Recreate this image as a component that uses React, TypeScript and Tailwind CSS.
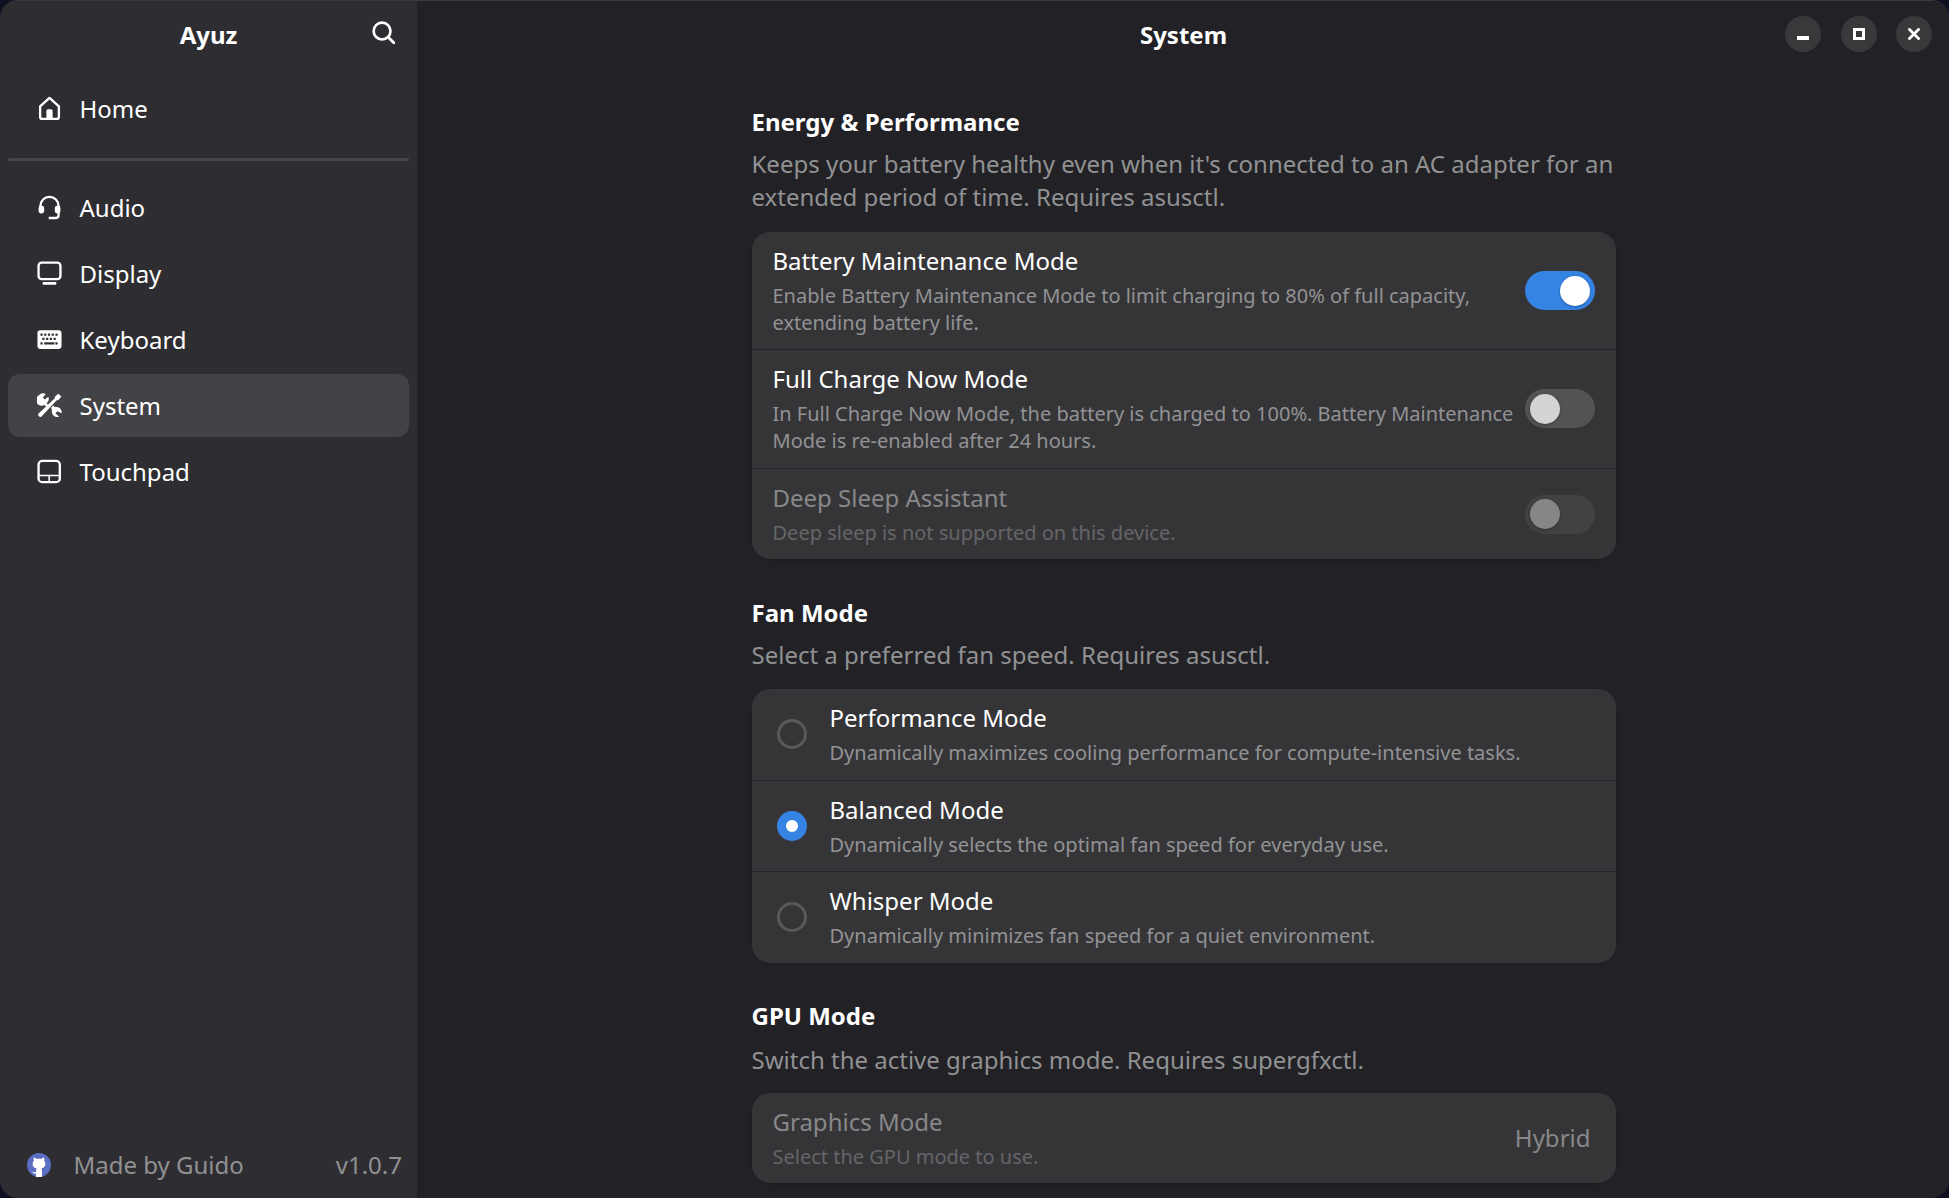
import React from 'react';

const Icon = ({ children }: { children: React.ReactNode }) => (
    <svg viewBox="0 0 16 16" className="w-[25px] h-[25px] shrink-0 text-white" fill="none" stroke="currentColor" strokeWidth="1.5">
        {children}
    </svg>
);

const HomeIcon = () => (
    <Icon>
        <path d="M8 1.2 L14 6.6 V13.2 Q14 14.6 12.8 14.6 H3.2 Q2 14.6 2 13.2 V6.6 Z" strokeLinejoin="round" />
        <path d="M6 14.4 V9.6 Q6 8.4 7 8.4 H9 Q10 8.4 10 9.6 V14.4 Z" fill="currentColor" stroke="none" />
    </Icon>
);

const HeadsetIcon = () => (
    <Icon>
        <path d="M2.2 9 V7 A5.8 5.8 0 0 1 13.8 7 V13 Q13.8 14.7 12.2 14.7 H7.5" />
        <rect x="1" y="6.8" width="3.6" height="5" rx="1.5" fill="currentColor" stroke="none" />
        <rect x="11.4" y="6.8" width="3.6" height="5" rx="1.5" fill="currentColor" stroke="none" />
    </Icon>
);

const DisplayIcon = () => (
    <Icon>
        <rect x="1" y="1" width="14" height="10.6" rx="2" />
        <rect x="3.6" y="13.4" width="8.8" height="1.8" rx="0.6" fill="currentColor" stroke="none" />
    </Icon>
);

const KeyboardIcon = () => (
    <svg viewBox="0 0 16 16" className="w-[25px] h-[25px] shrink-0 text-white">
        <rect x="0.3" y="2" width="15.4" height="12" rx="1.8" fill="currentColor" />
        <g fill="#2e2e32">
            <rect x="2.2" y="4.2" width="1.4" height="1.4" />
            <rect x="4.6" y="4.2" width="1.4" height="1.4" />
            <rect x="7" y="4.2" width="1.4" height="1.4" />
            <rect x="9.4" y="4.2" width="1.4" height="1.4" />
            <rect x="11.8" y="4.2" width="1.4" height="1.4" />
            <rect x="3.4" y="6.9" width="1.4" height="1.4" />
            <rect x="5.8" y="6.9" width="1.4" height="1.4" />
            <rect x="8.2" y="6.9" width="1.4" height="1.4" />
            <rect x="10.6" y="6.9" width="1.4" height="1.4" />
            <rect x="2.2" y="9.8" width="1.4" height="1.4" />
            <rect x="4.6" y="9.8" width="6.6" height="1.4" />
            <rect x="11.8" y="9.8" width="1.4" height="1.4" />
        </g>
    </svg>
);

const ToolsIcon = () => (
    <svg viewBox="0 0 16 16" className="w-[25px] h-[25px] shrink-0 text-white" fill="currentColor">
        <path d="M13.6 0.4 L15.6 2.2 L13.6 4.6 L12.6 4.6 L2.9 15 Q2.2 15.7 1.4 15.1 L0.9 14.6 Q0.4 13.8 1 13.1 L11.4 3.4 L11.4 2.4 Z" />
        <path d="M1.2 1.4 A3.6 3.6 0 0 1 5.6 0.6 L3.8 2.8 L5 4.2 L7.2 2.4 A3.6 3.6 0 0 1 6.2 6.6 L7.4 7.8 L6 9 L4.8 7.7 A3.6 3.6 0 0 1 1.2 1.4 Z" />
        <path d="M9 9.4 L10.4 8 L11.4 9 A3.6 3.6 0 0 1 15.8 13 L12.9 11.7 L11.8 12.9 L14.2 15.2 A3.6 3.6 0 0 1 9.6 10.8 Z" />
    </svg>
);

const TouchpadIcon = () => (
    <Icon>
        <rect x="1" y="1.2" width="13.6" height="13.6" rx="2.4" />
        <path d="M1 10.6 H14.6 M7.8 10.6 V14.8" strokeWidth="1" />
    </Icon>
);

const GithubIcon = () => (
    <svg viewBox="0 0 24 24" className="w-6 h-6 shrink-0">
        <circle cx="12" cy="12" r="12" fill="#5a6fc4" />
        <path d="M7 4.6 C8 4.6 9.2 5.4 9.8 6 C11 5.7 13 5.7 14.2 6 C14.8 5.4 16 4.6 17 4.6 C17.5 5.8 17.5 7 17.2 7.8 C18 8.7 18.4 9.6 18.4 10.8 C18.4 13.8 16.4 15.2 14.2 15.6 C14.8 16.2 15 17 15 17.8 V24 H9 V20.6 C7.4 21 6 20.4 5.2 18.8 C6.4 19 7.6 19.8 9 19 V17.8 C9 17 9.2 16.2 9.8 15.6 C7.6 15.2 5.6 13.8 5.6 10.8 C5.6 9.6 6 8.7 6.8 7.8 C6.5 7 6.5 5.8 7 4.6 Z" fill="#ffffff" />
    </svg>
);

const navTop = [{ label: 'Home', icon: <HomeIcon /> }];
const navRest = [
    { label: 'Audio', icon: <HeadsetIcon /> },
    { label: 'Display', icon: <DisplayIcon /> },
    { label: 'Keyboard', icon: <KeyboardIcon /> },
    { label: 'System', icon: <ToolsIcon />, active: true },
    { label: 'Touchpad', icon: <TouchpadIcon /> },
];

const NavRow = ({ label, icon, active }: { label: string; icon: React.ReactNode; active?: boolean }) => (
    <div className={`flex items-center h-[63px] mx-2 pl-[29px] gap-[18px] rounded-[12px] text-[24px] text-white ${active ? 'bg-[#434347]' : ''}`}>
        {icon}
        <span className="-ml-[0.5px]">{label}</span>
    </div>
);

const Toggle = ({ on, disabled }: { on?: boolean; disabled?: boolean }) => (
    <div
        className={`w-[70px] h-[39px] shrink-0 rounded-full flex items-center px-[5px] ${on ? 'bg-[#3584e4] justify-end' : disabled ? 'bg-[#424245]' : 'bg-[#535356]'}`}
    >
        <div className={`w-[30px] h-[30px] rounded-full shadow-[0_1px_3px_rgba(0,0,0,0.3)] ${on ? 'bg-white' : disabled ? 'bg-[#868687]' : 'bg-[#d3d3d3]'}`} />
    </div>
);

const Radio = ({ on }: { on?: boolean }) =>
    on ? (
        <div className="w-[30px] h-[30px] shrink-0 rounded-full bg-[#3584e4] flex items-center justify-center">
            <div className="w-3 h-3 rounded-full bg-white" />
        </div>
    ) : (
        <div className="w-[30px] h-[30px] shrink-0 rounded-full border-[3px] border-[#59595b]" />
    );

type SwitchProps = { title: string; sub: string; disabled?: boolean; on?: boolean; border?: boolean; pb?: string };

const SwitchRow = ({ title, sub, disabled, on, border, pb = 'pb-[13px]' }: SwitchProps) => (
    <div className={`flex items-center pl-[21px] pr-[21px] pt-[13px] gap-2 ${pb} ${border ? 'border-b border-[#242428]' : ''}`}>
        <div className="flex-1 min-w-0">
            <div className={`text-[24px] leading-[32px] ${disabled ? 'text-[#88888a]' : 'text-white'}`}>{title}</div>
            <div className={`mt-[5px] text-[20px] leading-[27px] ${disabled ? 'text-[#656567]' : 'text-[#929294]'}`}>{sub}</div>
        </div>
        <Toggle on={on} disabled={disabled} />
    </div>
);

type RadioProps = { title: string; sub: string; on?: boolean; border?: boolean; pb?: string };

const RadioRow = ({ title, sub, on, border, pb = 'pb-[13px]' }: RadioProps) => (
    <div className={`flex items-center pl-[25px] pr-[21px] pt-[13px] gap-[23px] ${pb} ${border ? 'border-b border-[#242428]' : ''}`}>
        <Radio on={on} />
        <div className="flex-1 min-w-0">
            <div className="text-[24px] leading-[32px] text-white">{title}</div>
            <div className="mt-[5px] text-[20px] leading-[27px] text-[#929294]">{sub}</div>
        </div>
    </div>
);

const Heading = ({ children, className }: { children: React.ReactNode; className?: string }) => (
    <h2 className={`text-[24px] leading-[33px] font-bold text-white ${className ?? ''}`}>{children}</h2>
);

const Desc = ({ children, className }: { children: React.ReactNode; className?: string }) => (
    <p className={`text-[24px] leading-[33px] text-[#919193] ${className ?? ''}`}>{children}</p>
);

const App = () => {
    return (
        <div className="h-[1198px] w-[1949px] bg-[#0e0f20] overflow-hidden" style={{ fontFamily: '"Noto Sans", sans-serif' }}>
            <div className="flex h-full rounded-[18px] overflow-hidden border-t border-[#3a3a3e]">
                <aside className="w-[417px] shrink-0 bg-[#2e2e32] flex flex-col">
                    <div className="relative h-[67px] flex items-center justify-center">
                        <span className="text-[24px] font-bold text-white">Ayuz</span>
                        <svg viewBox="0 0 24 24" className="absolute right-[22px] top-[20px] w-[23px] h-[23px] text-white" fill="none" stroke="currentColor" strokeWidth="2.8" strokeLinecap="round">
                            <circle cx="10.5" cy="10.5" r="8.8" />
                            <path d="M17 17 L23 23" />
                        </svg>
                    </div>
                    <nav className="pt-[9px]">
                        {navTop.map((n) => (
                            <NavRow key={n.label} {...n} />
                        ))}
                    </nav>
                    <div className="mx-2 mt-[18px] mb-[15px] h-[3px] rounded-full bg-[#47474b]" />
                    <nav className="flex flex-col gap-[3px]">
                        {navRest.map((n) => (
                            <NavRow key={n.label} {...n} />
                        ))}
                    </nav>
                    <div className="mt-auto flex items-center h-[66px] pl-[27px] pr-[15px] text-[24px] text-[#919193]">
                        <GithubIcon />
                        <span className="ml-[22.5px]">Made by Guido</span>
                        <span className="ml-auto">v1.0.7</span>
                    </div>
                </aside>
                <main className="flex-1 bg-[#222226] relative">
                    <div className="relative h-[67px] flex items-center justify-center pl-px">
                        <span className="text-[24px] font-bold text-white">System</span>
                        <div className="absolute right-[17px] top-[15px] flex gap-[19.5px]">
                            <div className="w-9 h-9 rounded-full bg-[#39393c] flex items-center justify-center">
                                <div className="w-3 h-1 bg-white mt-2" />
                            </div>
                            <div className="w-9 h-9 rounded-full bg-[#39393c] flex items-center justify-center">
                                <div className="w-3 h-3 border-[3px] border-white" />
                            </div>
                            <div className="w-9 h-9 rounded-full bg-[#39393c] flex items-center justify-center">
                                <svg viewBox="0 0 12 12" className="w-3 h-3 text-white" stroke="currentColor" strokeWidth="2.8">
                                    <path d="M0.5 0.5 L11.5 11.5 M11.5 0.5 L0.5 11.5" />
                                </svg>
                            </div>
                        </div>
                    </div>
                    <div className="pl-px">
                        <div className="w-[864px] mx-auto pt-[37px]">
                            <Heading>Energy &amp; Performance</Heading>
                            <Desc className="mt-[9px]">
                                Keeps your battery healthy even when it's connected to an AC adapter for an extended period of time. Requires asusctl.
                            </Desc>
                            <div className="mt-[19px] rounded-[18px] bg-[#353538] shadow-sm">
                                <SwitchRow
                                    border
                                    on
                                    title="Battery Maintenance Mode"
                                    sub="Enable Battery Maintenance Mode to limit charging to 80% of full capacity, extending battery life."
                                />
                                <SwitchRow
                                    border
                                    pb="pb-[14px]"
                                    title="Full Charge Now Mode"
                                    sub="In Full Charge Now Mode, the battery is charged to 100%. Battery Maintenance Mode is re-enabled after 24 hours."
                                />
                                <SwitchRow disabled title="Deep Sleep Assistant" sub="Deep sleep is not supported on this device." />
                            </div>

                            <Heading className="mt-[37px]">Fan Mode</Heading>
                            <Desc className="mt-[9px]">Select a preferred fan speed. Requires asusctl.</Desc>
                            <div className="mt-[18px] rounded-[18px] bg-[#353538] shadow-sm">
                                <RadioRow border pb="pb-[14px]" title="Performance Mode" sub="Dynamically maximizes cooling performance for compute-intensive tasks." />
                                <RadioRow border on title="Balanced Mode" sub="Dynamically selects the optimal fan speed for everyday use." />
                                <RadioRow pb="pb-[14px]" title="Whisper Mode" sub="Dynamically minimizes fan speed for a quiet environment." />
                            </div>

                            <Heading className="mt-[36px]">GPU Mode</Heading>
                            <Desc className="mt-[11px]">Switch the active graphics mode. Requires supergfxctl.</Desc>
                            <div className="mt-[17px] rounded-[18px] bg-[#353538] shadow-sm flex items-center pl-[21px] pr-[25px] pt-[13px] pb-[13px]">
                                <div className="flex-1">
                                    <div className="text-[24px] leading-[32px] text-[#88888a]">Graphics Mode</div>
                                    <div className="mt-[5px] text-[20px] leading-[27px] text-[#656567]">Select the GPU mode to use.</div>
                                </div>
                                <span className="text-[24px] text-[#88888a]">Hybrid</span>
                            </div>
                        </div>
                    </div>
                </main>
            </div>
        </div>
    );
};

export default App;
